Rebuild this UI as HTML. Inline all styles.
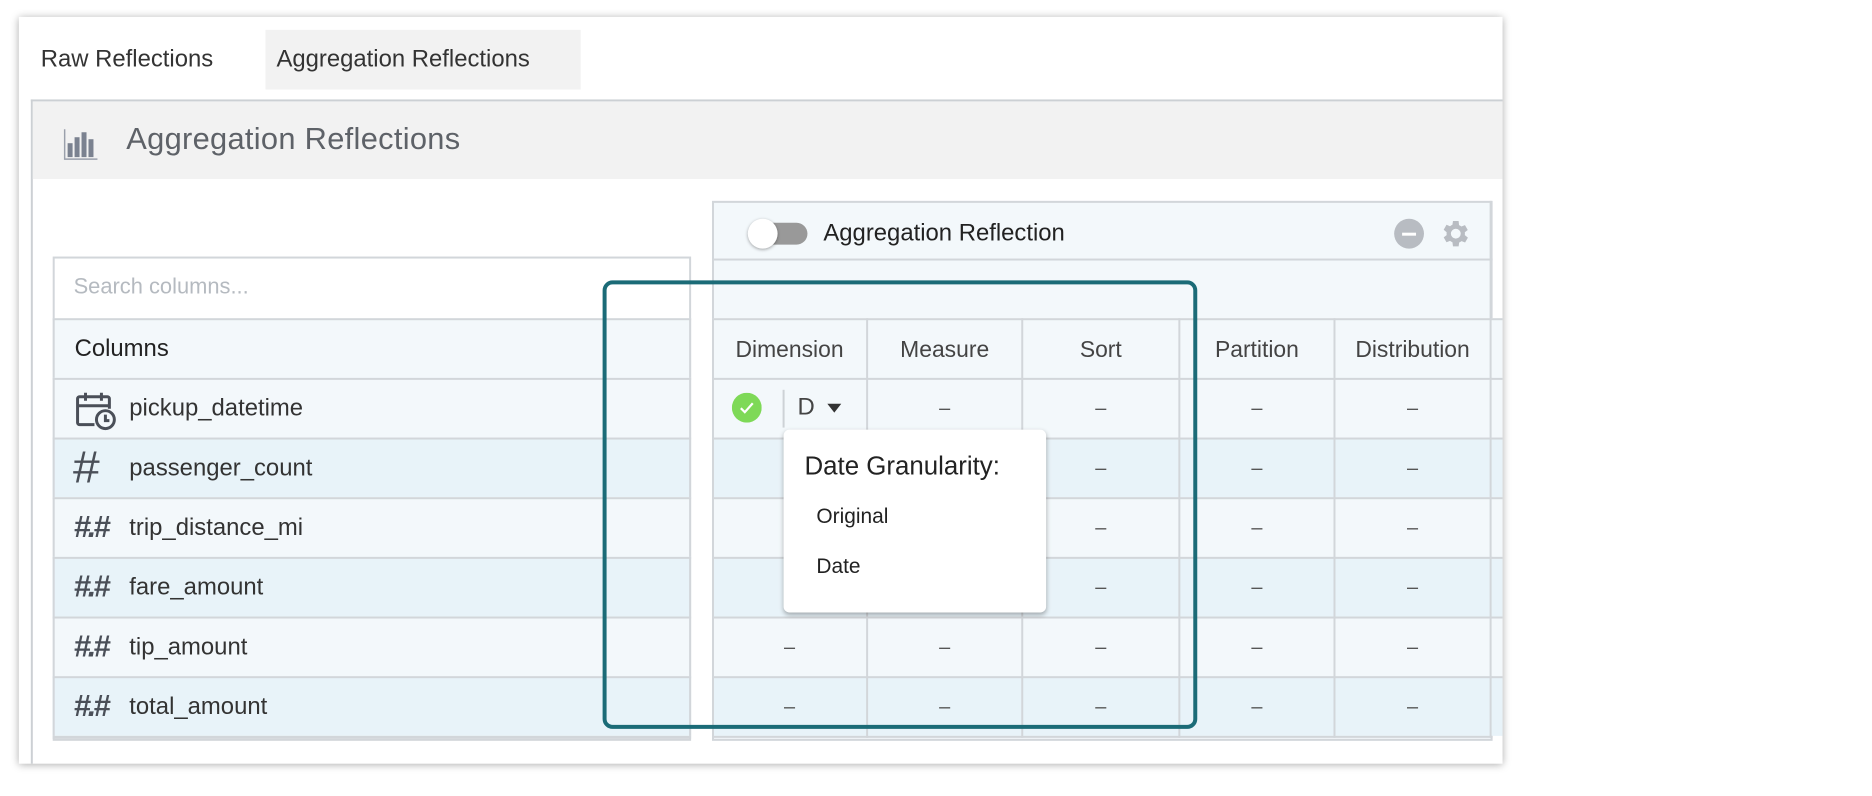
<!DOCTYPE html>
<html><head><meta charset="utf-8"><style>
*{box-sizing:border-box;margin:0;padding:0}
body{width:1872px;height:788px;background:#fff;font-family:"Liberation Sans",sans-serif;color:#333;position:relative;overflow:hidden}
#wrap{position:absolute;left:0;top:0;width:1872px;height:800px;transform:scale(0.9944);transform-origin:0 0}
.abs{position:absolute}
.panel{left:19px;top:17px;width:1492px;height:751px;background:#fff;box-shadow:0 1px 8px rgba(0,0,0,.35)}
.tab{top:30px;height:60px;line-height:60px;font-size:24px;color:#333}
.row{position:absolute;height:60px;border-top:2px solid #d2d6da}
.cell{position:absolute;height:60px;line-height:58px;text-align:center;font-size:20px;color:#555}
.name{position:absolute;left:75px;font-size:24px;line-height:58px;color:#333}
.vl{position:absolute;width:2px;background:#d2d6da}
</style></head><body><div id="wrap">
<div class="abs panel"></div>
<div class="abs tab" style="left:41px">Raw Reflections</div>
<div class="abs tab" style="left:267px;width:317px;background:#f2f2f2;padding-left:11px">Aggregation Reflections</div>
<div class="abs" style="left:31px;top:100px;width:1480px;height:2px;background:#ccd0d4"></div>
<div class="abs" style="left:31px;top:100px;width:2px;height:668px;background:#ccd0d4"></div>
<div class="abs" style="left:33px;top:102px;width:1478px;height:78px;background:#f2f2f2"></div>
<svg class="abs" style="left:64px;top:128px" width="36" height="34" viewBox="0 0 36 34"><g fill="#7b8290"><rect x="4" y="16" width="5" height="14"/><rect x="11" y="10" width="5" height="20"/><rect x="18" y="5" width="5" height="25"/><rect x="25" y="12" width="5" height="18"/></g><path d="M1 2V32H34" stroke="#9aa0ab" stroke-width="1.5" fill="none"/></svg>
<div class="abs" style="left:127px;top:122px;font-size:31px;color:#5e6268;font-weight:300;letter-spacing:.3px">Aggregation Reflections</div>

<div class="abs" style="left:53px;top:258px;width:642px;height:487px;border:2px solid #d2d6da;background:#fff"></div>
<div class="abs" style="left:74px;top:275px;font-size:22px;color:#b5bac0">Search columns...</div>
<div class="row" style="left:53px;width:642px;top:320px;background:#f3f8fb;border-left:2px solid #d2d6da;border-right:2px solid #d2d6da"><span class="name" style="left:20px;color:#222">Columns</span></div>

<div class="abs" style="left:716px;top:202px;width:785px;height:543px;border:2px solid #d2d6da;background:#f3f8fb"></div>
<div class="abs" style="left:716px;top:260px;width:785px;height:2px;background:#d2d6da"></div>
<div class="abs" style="left:754px;top:224px;width:58px;height:22px;border-radius:11px;background:#999"></div>
<div class="abs" style="left:752px;top:220px;width:30px;height:30px;border-radius:50%;background:#fff;box-shadow:0 1px 3px rgba(0,0,0,.35)"></div>
<div class="abs" style="left:828px;top:221px;font-size:24px;color:#222">Aggregation Reflection</div>
<div class="abs" style="left:1402px;top:220px;width:30px;height:30px;border-radius:50%;background:#b8bcc2"></div>
<div class="abs" style="left:1410px;top:234px;width:14px;height:3px;background:#fff"></div>
<svg class="abs" style="left:1447px;top:218px" width="34" height="34" viewBox="0 0 24 24"><path fill="#b8bcc2" d="M19.4 13a7.5 7.5 0 000-2l2.1-1.6-2-3.5-2.5 1a7.4 7.4 0 00-1.7-1L15 3h-4l-.4 2.7a7.4 7.4 0 00-1.7 1l-2.5-1-2 3.5L6.5 11a7.5 7.5 0 000 2l-2.1 1.6 2 3.5 2.5-1a7.4 7.4 0 001.7 1L11 21h4l.4-2.7a7.4 7.4 0 001.7-1l2.5 1 2-3.5zM13 15.5a3.5 3.5 0 110-7 3.5 3.5 0 010 7z" transform="translate(-1 0)"/></svg>

<div id="rows"></div>
<script>
(function(){
var names=["pickup_datetime","passenger_count","trip_distance_mi","fare_amount","tip_amount","total_amount"];
var cols=[716,872,1028,1186,1342,1499];
var h='';
h+='<div class="row" style="left:716px;width:795px;top:320px;background:#f3f8fb"></div>';
var hd=["Dimension","Measure","Sort","Partition","Distribution"];
for(var c=0;c<5;c++){h+='<div class="cell" style="left:'+cols[c]+'px;width:'+(cols[c+1]-cols[c])+'px;top:322px;font-size:23px;color:#444">'+hd[c]+'</div>';}
for(var i=0;i<6;i++){
 var ty=380+i*60,bg=i%2?'#e8f3f9':'#f3f8fb';
 h+='<div class="row" style="left:53px;width:642px;top:'+ty+'px;background:'+bg+';border-left:2px solid #d2d6da;border-right:2px solid #d2d6da"><span class="name">'+names[i]+'</span></div>';
 h+='<div class="row" style="left:716px;width:795px;top:'+ty+'px;background:'+bg+'"></div>';
 for(var c=0;c<5;c++){ if(i==0&&c==0)continue; h+='<div class="cell" style="left:'+cols[c]+'px;width:'+(cols[c+1]-cols[c])+'px;top:'+(ty+2)+'px">–</div>';}
}
h+='<div class="abs" style="left:716px;top:740px;width:785px;height:2px;background:#d2d6da"></div>';
h+='<div class="abs" style="left:53px;top:740px;width:642px;height:3px;background:#d2d6da"></div>';
for(var c=1;c<5;c++)h+='<div class="vl" style="left:'+(cols[c]-1)+'px;top:320px;height:422px"></div>';
h+='<div class="vl" style="left:716px;top:320px;height:422px"></div><div class="vl" style="left:1498px;top:202px;height:540px"></div>';
document.getElementById('rows').innerHTML=h;
})();
</script>

<svg class="abs" style="left:75px;top:393px" width="44" height="40" viewBox="0 0 44 40" fill="none" stroke="#4a4f58" stroke-width="3"><path d="M20 34H5a2 2 0 01-2-2V8a2 2 0 012-2h28a2 2 0 012 2v10"/><path d="M3 15h32M11 2v8M27 2v8"/><circle cx="31" cy="29" r="9"/><path d="M31 24v6h4"/></svg>
<div class="abs" style="left:74px;top:444px;font-size:46px;font-weight:300;color:#4a4f58;line-height:50px;transform:scaleX(1.05)">#</div>
<div class="abs" style="left:74px;top:512px;font-size:31px;font-weight:bold;font-style:italic;color:#4a4f58;letter-spacing:-3px">#.#</div>
<div class="abs" style="left:74px;top:572px;font-size:31px;font-weight:bold;font-style:italic;color:#4a4f58;letter-spacing:-3px">#.#</div>
<div class="abs" style="left:74px;top:632px;font-size:31px;font-weight:bold;font-style:italic;color:#4a4f58;letter-spacing:-3px">#.#</div>
<div class="abs" style="left:74px;top:692px;font-size:31px;font-weight:bold;font-style:italic;color:#4a4f58;letter-spacing:-3px">#.#</div>

<svg class="abs" style="left:736px;top:395px" width="30" height="30" viewBox="0 0 30 30"><circle cx="15" cy="15" r="15" fill="#7ed957"/><path d="M9 15.5l4 4 8-9" stroke="#fff" stroke-width="2.2" fill="none"/></svg>
<div class="abs" style="left:787px;top:392px;width:2px;height:38px;background:#cdd2d6"></div>
<div class="abs" style="left:802px;top:396px;font-size:24px;color:#444">D</div>
<div class="abs" style="left:832px;top:406px;width:0;height:0;border-left:7px solid transparent;border-right:7px solid transparent;border-top:9px solid #333"></div>

<div class="abs" style="left:788px;top:432px;width:264px;height:184px;background:#fff;border-radius:6px;box-shadow:0 2px 5px rgba(0,0,0,.3)"></div>
<div class="abs" style="left:809px;top:453px;font-size:26px;color:#222">Date Granularity:</div>
<div class="abs" style="left:821px;top:508px;font-size:21px;color:#222">Original</div>
<div class="abs" style="left:821px;top:558px;font-size:21px;color:#222">Date</div>

<div class="abs" style="left:606px;top:282px;width:598px;height:451px;border:4px solid #1b6b77;border-radius:10px"></div>
</div></body></html>
